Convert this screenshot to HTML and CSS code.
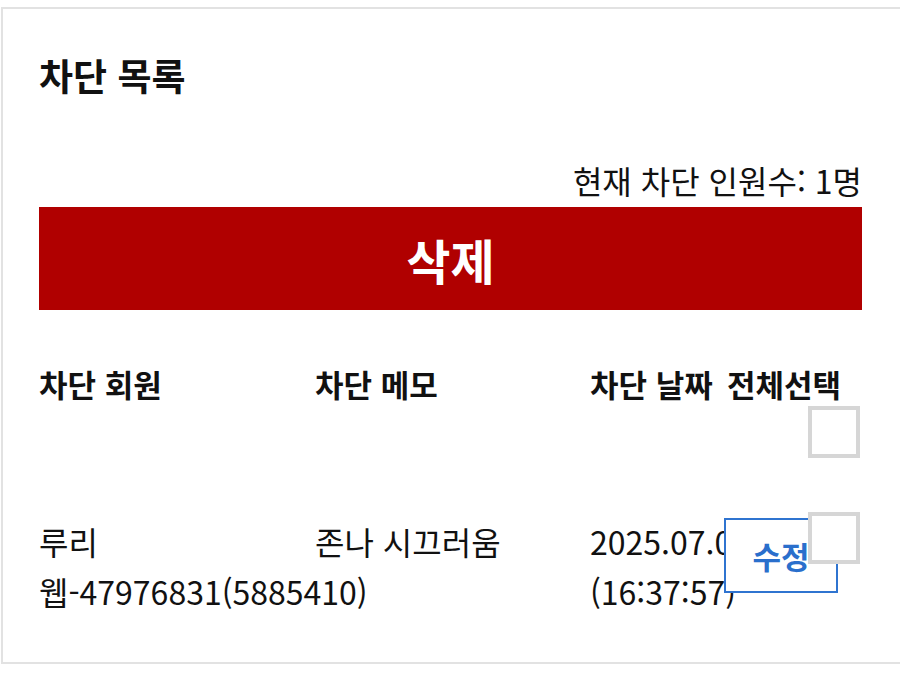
FILE: index.html
```html
<!DOCTYPE html>
<html lang="ko">
<head>
<meta charset="utf-8">
<title>차단 목록</title>
<link rel="stylesheet" href="styles.css">
</head>
<body>
<div class="card">
  <h1 class="title">차단 목록</h1>
  <div class="count">현재 차단 인원수: 1명</div>
  <button class="delete-btn">삭제</button>
  <div class="table">
    <div class="row head">
      <div class="cell">차단 회원</div>
      <div class="cell">차단 메모</div>
      <div class="cell">차단 날짜</div>
      <div class="cell select-all">
        <span>전체선택</span>
        <span class="checkbox"></span>
      </div>
    </div>
    <div class="row data">
      <div class="cell text">루리<br>웹-47976831(5885410)</div>
      <div class="cell text">존나 시끄러움</div>
      <div class="cell text date">2025.07.07<br>(16:37:57)</div>
      <div class="cell actions">
        <button class="edit-btn">수정</button>
        <span class="checkbox overlap"></span>
      </div>
    </div>
  </div>
</div>
</body>
</html>
```

FILE: styles.css
```css
html, body {
  margin: 0;
  padding: 0;
  background: #ffffff;
}

body {
  font-family: "Noto Sans CJK KR", "Noto Sans", sans-serif;
  color: #111111;
}

.card {
  margin: 7px 0 0 1px;
  border-top: 2px solid #e2e2e2;
  border-left: 2px solid #e2e2e2;
  border-bottom: 2px solid #e2e2e2;
  padding: 0 38px 0 36px;
  height: 657px;
  box-sizing: border-box;
}

.title {
  margin: 0;
  padding-top: 44px;
  font-size: 37px;
  line-height: 44px;
  font-weight: 700;
}

.count {
  margin-top: 63px;
  text-align: right;
  font-size: 32px;
  line-height: 40px;
}

.delete-btn {
  display: block;
  width: 100%;
  height: 103px;
  margin-top: 7px;
  border: none;
  background: #b00000;
  color: #ffffff;
  font-family: inherit;
  font-size: 48px;
  font-weight: 700;
  padding: 0;
}

.row {
  display: grid;
  grid-template-columns: 276px 275px 137px 1fr;
}

.head {
  margin-top: 54px;
  font-size: 31px;
  font-weight: 700;
  line-height: 40px;
  white-space: nowrap;
}

.select-all {
  display: flex;
  flex-direction: column;
  align-items: flex-start;
}

.select-all .checkbox {
  align-self: flex-end;
  margin: 2px 2px 0 0;
}

.checkbox {
  display: block;
  width: 52px;
  height: 52px;
  box-sizing: border-box;
  border: 4px solid #d6d6d6;
  background: #ffffff;
}

.data {
  margin-top: 54px;
}

.text {
  padding-top: 4px;
  font-size: 32px;
  line-height: 50px;
  white-space: nowrap;
}

.actions {
  display: flex;
  align-items: flex-start;
}

.edit-btn {
  margin: 6px 0 0 -3px;
  width: 114px;
  height: 75px;
  flex: none;
  box-sizing: border-box;
  border: 2px solid #2f74d0;
  background: #ffffff;
  color: #2a6fcc;
  font-family: inherit;
  font-size: 31px;
  font-weight: 700;
  padding: 0;
}

.checkbox.overlap {
  flex: none;
  margin-left: -30px;
}
```
